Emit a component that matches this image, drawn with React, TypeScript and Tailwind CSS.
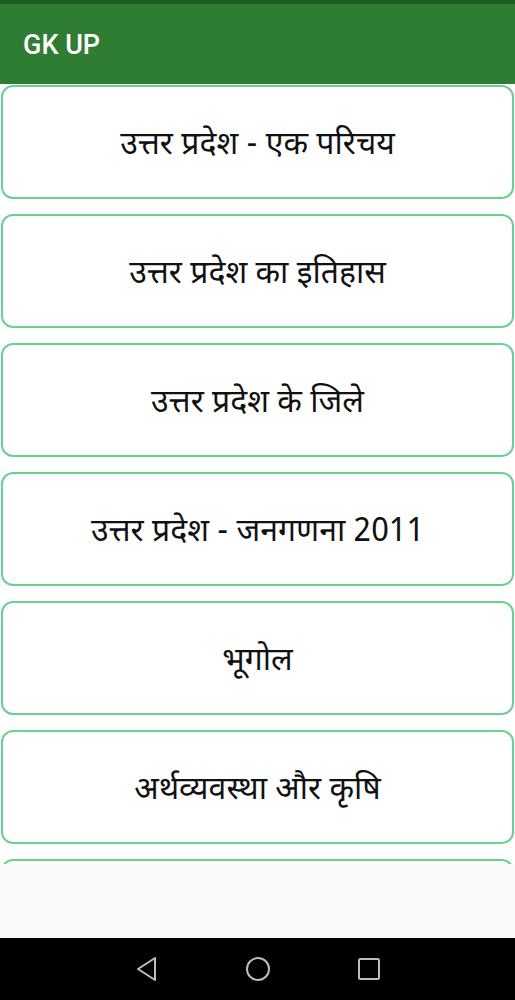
import React from "react";

const items = [
  "उत्तर प्रदेश - एक परिचय",
  "उत्तर प्रदेश का इतिहास",
  "उत्तर प्रदेश के जिले",
  "उत्तर प्रदेश - जनगणना 2011",
  "भूगोल",
  "अर्थव्यवस्था और कृषि",
  "",
];

export default function App() {
  return (
    <div className="relative w-[515px] h-[1000px] overflow-hidden bg-white flex flex-col" style={{ fontFamily: '"Noto Sans Devanagari", "Noto Sans", Roboto, sans-serif' }}>
      <div className="h-[4px] bg-[#1b5e20] shrink-0" />
      <div className="h-[80px] bg-[#2e7d32] shrink-0 flex items-center px-[23px] pt-[2px] z-10">
        <span className="text-white text-[27px] font-medium" style={{ fontFamily: 'Roboto, "Liberation Sans", sans-serif' }}>GK UP</span>
      </div>
      <div className="flex-1 flex flex-col gap-[15px] pt-[1px] px-[1px] overflow-hidden">
        {items.map((t, i) => (
          <div key={i} className="shrink-0 h-[114px] rounded-[12px] border-[2px] border-[#6ad08f] bg-white flex items-center justify-center">
            {t && <span className="text-[32px] text-[#111] leading-none pt-[7px]">{t}</span>}
          </div>
        ))}
      </div>
      <div className="absolute left-0 right-0 top-[864px] h-[74px] bg-[#fafafa]" />
      <div className="h-[62px] bg-black shrink-0 flex items-center justify-center gap-[86px] z-10">
        <svg width="24" height="26" viewBox="0 0 24 26" fill="none" stroke="#bdbdbd" strokeWidth="2" strokeLinejoin="round">
          <path d="M20 2 L3 13 L20 24 Z" />
        </svg>
        <svg width="26" height="26" viewBox="0 0 26 26" fill="none" stroke="#bdbdbd" strokeWidth="2">
          <circle cx="13" cy="13" r="11" />
        </svg>
        <svg width="24" height="24" viewBox="0 0 24 24" fill="none" stroke="#bdbdbd" strokeWidth="2">
          <rect x="2" y="2" width="20" height="20" rx="1.5" />
        </svg>
      </div>
    </div>
  );
}
